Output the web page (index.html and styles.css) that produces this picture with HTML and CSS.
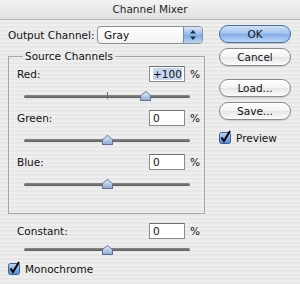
FILE: index.html
```html
<!DOCTYPE html>
<html lang="en">
<head>
  <meta charset="UTF-8" />
  <title>Channel Mixer</title>
  <link rel="stylesheet" href="styles.css">
</head>
<body>
  <div class="window">
    <div class="titlebar">Channel Mixer</div>
    <div class="content">
      <div class="main">
        <div class="output-row">
          <span class="output-label">Output Channel:</span>
          <div class="select">
            <span class="select-value">Gray</span>
            <span class="select-arrows">
              <svg width="8" height="12" viewBox="0 0 8 12"><path d="M4 1 L7 4.5 H1 Z M4 11 L7 7.5 H1 Z" fill="#1d2c4a"/></svg>
            </span>
          </div>
        </div>

        <fieldset class="group">
          <legend>Source Channels</legend>
          <div class="channel">
            <div class="field-row">
              <span class="field-label">Red:</span>
              <span class="num"><span class="selected">+100</span></span>
              <span class="pct">%</span>
            </div>
            <div class="slider">
              <div class="track"></div>
              <span class="tick"></span>
              <span class="thumb" style="left: 73%"></span>
            </div>
          </div>
          <div class="channel">
            <div class="field-row">
              <span class="field-label">Green:</span>
              <span class="num">0</span>
              <span class="pct">%</span>
            </div>
            <div class="slider">
              <div class="track"></div>
              <span class="thumb" style="left: 50%"></span>
            </div>
          </div>
          <div class="channel">
            <div class="field-row">
              <span class="field-label">Blue:</span>
              <span class="num">0</span>
              <span class="pct">%</span>
            </div>
            <div class="slider">
              <div class="track"></div>
              <span class="thumb" style="left: 50%"></span>
            </div>
          </div>
        </fieldset>

        <div class="channel constant">
          <div class="field-row">
            <span class="field-label">Constant:</span>
            <span class="num">0</span>
            <span class="pct">%</span>
          </div>
          <div class="slider">
            <div class="track"></div>
            <span class="thumb" style="left: 50%"></span>
          </div>
        </div>

        <label class="check mono">
          <svg class="box" width="14" height="14" viewBox="0 0 14 14">
            <defs>
              <linearGradient id="cb1" x1="0" y1="0" x2="0" y2="1">
                <stop offset="0" stop-color="#c3d7f2"/>
                <stop offset="0.5" stop-color="#86aee4"/>
                <stop offset="1" stop-color="#4f88d4"/>
              </linearGradient>
            </defs>
            <rect x="0.5" y="2.5" width="11" height="11" rx="2" fill="url(#cb1)" stroke="#3a5f96"/>
            <path d="M2.5 7.5 L5 11 L11 1" fill="none" stroke="#000" stroke-width="2"/>
          </svg>
          Monochrome
        </label>
      </div>

      <div class="buttons">
        <button class="btn default">OK</button>
        <button class="btn">Cancel</button>
        <button class="btn spaced">Load...</button>
        <button class="btn">Save...</button>
        <label class="check preview">
          <svg class="box" width="14" height="14" viewBox="0 0 14 14">
            <defs>
              <linearGradient id="cb2" x1="0" y1="0" x2="0" y2="1">
                <stop offset="0" stop-color="#c3d7f2"/>
                <stop offset="0.5" stop-color="#86aee4"/>
                <stop offset="1" stop-color="#4f88d4"/>
              </linearGradient>
            </defs>
            <rect x="0.5" y="2.5" width="11" height="11" rx="2" fill="url(#cb2)" stroke="#3a5f96"/>
            <path d="M2.5 7.5 L5 11 L11 1" fill="none" stroke="#000" stroke-width="2"/>
          </svg>
          Preview
        </label>
      </div>
    </div>
  </div>
</body>
</html>
```

FILE: styles.css
```css
body {
  margin: 0;
  font-family: "DejaVu Sans", sans-serif;
  font-size: 10.5px;
  color: #111;
}

.window {
  width: 300px;
  height: 284px;
  overflow: hidden;
  background: repeating-linear-gradient(#eeeeee 0 2px, #e7e7e7 2px 4px);
}

.titlebar {
  height: 19px;
  line-height: 19px;
  text-align: center;
  color: #262626;
  background: linear-gradient(#f3f3f3, #e0e0e0);
  border-bottom: 1px solid #b8b8b8;
}

.content {
  display: flex;
  gap: 14px;
}

.main {
  width: 197px;
  padding-left: 8px;
  padding-top: 6px;
}

/* output channel popup */
.output-row {
  display: flex;
  align-items: center;
  height: 18px;
}

.output-label {
  width: 89px;
}

.select {
  display: flex;
  align-items: center;
  width: 104px;
  height: 16px;
  border: 1px solid #8e8e8e;
  border-radius: 4px;
  background: linear-gradient(#ffffff, #f1f1f1);
  overflow: hidden;
}

.select-value {
  flex: 1;
  padding-left: 6px;
}

.select-arrows {
  width: 18px;
  height: 16px;
  display: flex;
  align-items: center;
  justify-content: center;
  border-left: 1px solid #6f8fbf;
  background: linear-gradient(#d6e5f8, #92b7e8 50%, #7eaae4 51%, #b9d4f5);
}

/* group box */
.group {
  margin: 5px 0 0 0;
  padding: 3px 6px 15px 8px;
  border: 1px solid #a6a6a6;
}

.group legend {
  padding: 0 2px;
  margin-left: 6px;
  line-height: 14px;
}

.field-row {
  display: flex;
  align-items: center;
  height: 16px;
}

.field-label {
  flex: 1;
}

.num {
  width: 31px;
  height: 14px;
  line-height: 14px;
  padding-left: 3px;
  background: #fff;
  border: 1px solid #8c8c8c;
  border-top-color: #6e6e6e;
}

.selected {
  background: #c4d5ef;
}

.pct {
  width: 8px;
  margin-left: 5px;
}

/* sliders */
.slider {
  position: relative;
  height: 28px;
  margin: 0 8px 0 7px;
  display: flex;
  align-items: center;
}

.track {
  width: 100%;
  height: 3px;
  border-radius: 2px;
  background: linear-gradient(#8a8a8a, #5e5e5e);
}

.tick {
  position: absolute;
  left: 50%;
  top: 10px;
  width: 1px;
  height: 7px;
  background: #666;
}

.thumb {
  position: absolute;
  top: 9px;
  width: 11px;
  height: 10px;
  margin-left: -5px;
  background: #5d6f92;
  clip-path: polygon(50% 0, 100% 45%, 100% 100%, 0 100%, 0 45%);
}

.thumb::after {
  content: "";
  position: absolute;
  inset: 1px;
  background: linear-gradient(#e6eef9, #b3c7e6 55%, #94aed8);
  clip-path: polygon(50% 0, 100% 45%, 100% 100%, 0 100%, 0 45%);
}

.constant {
  margin: 9px 7px 0 9px;
}

.constant .slider {
  height: 21px;
}

.constant .thumb {
  top: 6px;
}

/* checkboxes */
.check {
  display: flex;
  align-items: center;
  gap: 3px;
}

.check .box {
  margin-top: -3px;
}

.mono {
  margin-top: 3px;
}

/* buttons */
.buttons {
  width: 72px;
  padding-top: 5px;
  display: flex;
  flex-direction: column;
  gap: 5px;
}

.btn {
  height: 18px;
  padding: 0;
  font: inherit;
  color: #111;
  border: 1px solid #8a8a8a;
  border-radius: 9px;
  background: linear-gradient(#ffffff, #f2f2f2 50%, #e6e6e6 51%, #fbfbfb);
  box-shadow: 0 1px 1px rgba(0, 0, 0, 0.15);
}

.btn.default {
  border-color: #4b6e9f;
  background: linear-gradient(#d0e2f8, #9cc0ec 50%, #82ade8 51%, #bcd7f7);
}

.btn.spaced {
  margin-top: 8px;
}

.preview {
  margin-top: 7px;
}
```
